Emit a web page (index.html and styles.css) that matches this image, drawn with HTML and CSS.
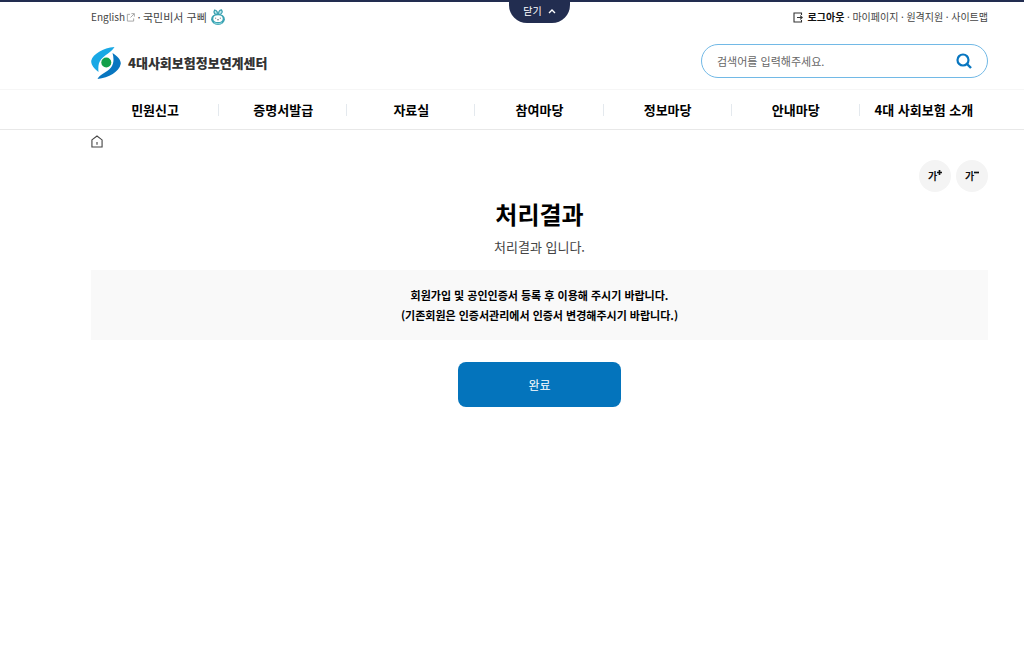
FILE: index.html
```html
<!DOCTYPE html>
<html lang="ko">
<head>
<meta charset="utf-8">
<meta name="viewport" content="width=device-width, initial-scale=1">
<title>처리결과 - 4대사회보험정보연계센터</title>
<link rel="stylesheet" href="styles.css">
</head>
<body>
<header class="header">
  <button class="fold" type="button">닫기
    <svg class="fold-icon" viewBox="0 0 8 6" aria-hidden="true"><path d="M1 5 4 2l3 3" fill="none" stroke="currentColor" stroke-width="1.4"/></svg>
  </button>
  <div class="wrap util">
    <div class="links">
      <a class="english" href="#">English
        <svg class="ext" viewBox="0 0 10 10" aria-hidden="true"><path d="M4.500 1.500H1.500v7.500H8.500V6M6 .7h3.300V4M9 1 5 5" fill="none" stroke="#888" stroke-width=".8"/></svg>
      </a>
      <span class="dot">·</span>
      <a class="helper" href="#">국민비서 구삐
        <svg class="mascot" viewBox="0 0 14 16" aria-hidden="true">
          <path d="M5.500 5.500C3 5 2.300 2.800 3.800 1 6 1.500 6.700 3.300 6.200 5.500M7.700 5.500C7.300 3 8.300 1 10.500.8 12 2.800 11 4.800 8.700 5.500" fill="#bfe8ee" stroke="#359dad" stroke-width="1.200"/>
          <ellipse cx="7" cy="10.300" rx="6.900" ry="5.600" fill="#3aa2b2"/>
          <ellipse cx="7" cy="9.700" rx="4.700" ry="3.400" fill="#fff"/>
          <path d="M4 9.200h1.200M8.800 9.200H10M6 10.500q1 1 2 0" fill="none" stroke="#58656c" stroke-width=".8"/>
          <path d="M3 13.800q4 2 8 0" fill="none" stroke="#8fd9df" stroke-width="1"/>
        </svg>
      </a>
    </div>
    <div class="links links-small">
      <a class="logout" href="#">
        <svg class="exit" viewBox="0 0 10 11" aria-hidden="true"><path d="M8.500 3V1H1v9h7.500V8M4 5.500h5.200M7.200 3.700 9.200 5.500 7.200 7.300" fill="none" stroke="#333" stroke-width="1.100"/></svg>
        로그아웃</a>
      <span class="dot">·</span><a href="#">마이페이지</a>
      <span class="dot">·</span><a href="#">원격지원</a>
      <span class="dot">·</span><a href="#">사이트맵</a>
    </div>
  </div>
  <div class="wrap brand">
    <a class="logo" href="#">
      <svg class="logo-mark" viewBox="0 0 30 32" aria-hidden="true">
        <path d="M23.500 0C12 1 2 7 .3 13.500-.4 17.500 3 21.500 7.500 25 7 20 7.500 15.500 10 12.500 13.500 8 20 5.500 23.500 0Z" fill="#19a8e5"/>
        <path d="M21.500 6C27 9.500 30.300 13.500 29.700 17 28 25 18 30.500 6.500 32 9 27 16 25.500 20 20.500 23 16.500 23 11.500 21.500 6Z" fill="#0876c0"/>
        <circle cx="15.300" cy="15.500" r="5" fill="#13a04b"/>
      </svg>
      <span>4대사회보험정보연계센터</span>
    </a>
    <form class="search" role="search">
      <input class="search-input" type="text" aria-label="검색어" placeholder="검색어를 입력해주세요.">
      <button class="search-button" type="button" aria-label="검색">
        <svg class="search-icon" viewBox="0 0 16 16" aria-hidden="true"><circle cx="7" cy="7" r="5.500" fill="none" stroke="currentColor" stroke-width="2.200"/><path d="m11 11 4 4" stroke="currentColor" stroke-width="2.400"/></svg>
      </button>
    </form>
  </div>
  <nav class="nav">
    <ul class="wrap menu">
      <li><a href="#">민원신고</a></li>
      <li><a href="#">증명서발급</a></li>
      <li><a href="#">자료실</a></li>
      <li><a href="#">참여마당</a></li>
      <li><a href="#">정보마당</a></li>
      <li><a href="#">안내마당</a></li>
      <li><a href="#">4대 사회보험 소개</a></li>
    </ul>
  </nav>
</header>
<main class="wrap main">
  <a class="home" href="#" aria-label="홈">
    <svg class="home-icon" viewBox="0 0 13 14" aria-hidden="true"><path d="M1 5.300 6.500 1 12 5.300V13H1ZM6.500 7.500V10.500" fill="none" stroke="#444" stroke-width="1.200"/></svg>
  </a>
  <div class="zoom">
    <button class="zoom-button" type="button" aria-label="글자 크게">가<svg class="sign" viewBox="0 0 6 6" aria-hidden="true"><path d="M0 3h6M3 0v6" stroke="currentColor" stroke-width="2"/></svg></button>
    <button class="zoom-button" type="button" aria-label="글자 작게">가<svg class="sign" viewBox="0 0 6 6" aria-hidden="true"><path d="M0 3h6" stroke="currentColor" stroke-width="2"/></svg></button>
  </div>
  <h1 class="title">처리결과</h1>
  <p class="subtitle">처리결과 입니다.</p>
  <div class="notice">
    <p>회원가입 및 공인인증서 등록 후 이용해 주시기 바랍니다.</p>
    <p>(기존회원은 인증서관리에서 인증서 변경해주시기 바랍니다.)</p>
  </div>
  <button class="done" type="button">완료</button>
</main>
</body>
</html>
```
FILE: styles.css
```css
* {
  box-sizing: border-box;
}

body {
  margin: 0;
  background: #fff;
  color: #111;
  font-family: "Noto Sans CJK KR", sans-serif;
  font-size: 11px;
  line-height: 20px;
}

a {
  color: inherit;
  text-decoration: none;
}

button,
input {
  margin: 0;
  padding: 0;
  border: 0;
  background: none;
  color: inherit;
  font: inherit;
}

button {
  cursor: pointer;
}

p,
h1,
ul {
  margin: 0;
  padding: 0;
}

svg {
  display: block;
  flex: none;
}

.wrap {
  padding-left: 91px;
  padding-right: 36px;
}

.header {
  position: relative;
  border-top: 2px solid #222d50;
}

.fold {
  position: absolute;
  top: -2px;
  left: 509px;
  display: flex;
  align-items: center;
  justify-content: center;
  gap: 6px;
  width: 61px;
  height: 23px;
  padding-bottom: 2px;
  border-radius: 0 0 18px 18px;
  background: #222d50;
  color: #fff;
  font-size: 10px;
}

.fold-icon {
  width: 8px;
  height: 6px;
}

.util {
  display: flex;
  justify-content: space-between;
  align-items: center;
  height: 30px;
  color: #444;
}

.links,
.links a {
  display: flex;
  align-items: center;
}

.links .english {
  gap: 1px;
  font-size: 10px;
}

.links-small {
  font-size: 10px;
}

.dot {
  width: 8px;
  text-align: center;
}

.links .helper {
  gap: 4px;
}

.links .logout {
  gap: 5px;
  color: #111;
  font-weight: 700;
}

.ext {
  width: 9px;
  height: 9px;
}

.mascot {
  width: 14px;
  height: 16px;
}

.exit {
  width: 10px;
  height: 11px;
}

.brand {
  display: flex;
  justify-content: space-between;
  align-items: center;
  height: 57px;
}

.logo {
  display: flex;
  align-items: center;
  gap: 7px;
  padding-top: 4px;
  color: #333;
  font-size: 13px;
  font-weight: 900;
}

.logo-mark {
  width: 30px;
  height: 32px;
}

.search {
  display: flex;
  align-items: center;
  width: 287px;
  height: 34px;
  padding: 0 15px;
  border: 1px solid #72b9e6;
  border-radius: 17px;
}

.search-input {
  flex: 1;
  min-width: 0;
  outline: 0;
}

.search-input::placeholder {
  color: #666;
  opacity: 1;
}

.search-button {
  color: #0876c0;
}

.search-icon {
  width: 16px;
  height: 16px;
}

.nav {
  border-top: 1px solid #f6f6f6;
  border-bottom: 1px solid #e8e8e8;
}

.menu {
  display: grid;
  grid-template-columns: repeat(7, 1fr);
  align-items: center;
  height: 39px;
  list-style: none;
  color: #000;
  font-size: 13px;
  font-weight: 700;
  text-align: center;
}

.menu li {
  position: relative;
}

.menu li + li::before {
  content: "";
  position: absolute;
  top: 4px;
  left: -1px;
  width: 1px;
  height: 12px;
  background: #e4e9ee;
}

.main {
  display: flex;
  flex-direction: column;
}

.home {
  align-self: flex-start;
  padding-top: 5px;
}

.home-icon {
  width: 12px;
  height: 13px;
}

.zoom {
  display: flex;
  justify-content: flex-end;
  gap: 5px;
  margin-top: 12px;
}

.zoom-button {
  display: flex;
  align-items: center;
  justify-content: center;
  width: 32px;
  height: 32px;
  border-radius: 50%;
  background: #f4f4f4;
  font-size: 10px;
  font-weight: 700;
}

.sign {
  width: 5px;
  height: 5px;
  margin-bottom: 8px;
}

.title {
  margin-top: 5px;
  color: #000;
  font-size: 24px;
  line-height: 34px;
  text-align: center;
}

.subtitle {
  margin-top: 6px;
  color: #444;
  font-size: 13px;
  text-align: center;
}

.notice {
  margin-top: 13px;
  padding: 15px;
  background: #f9f9f9;
  color: #000;
  font-weight: 700;
  text-align: center;
}

.done {
  align-self: center;
  width: 163px;
  height: 45px;
  margin-top: 22px;
  border-radius: 8px;
  background: #0474bc;
  color: #fff;
  font-size: 12px;
}
```
